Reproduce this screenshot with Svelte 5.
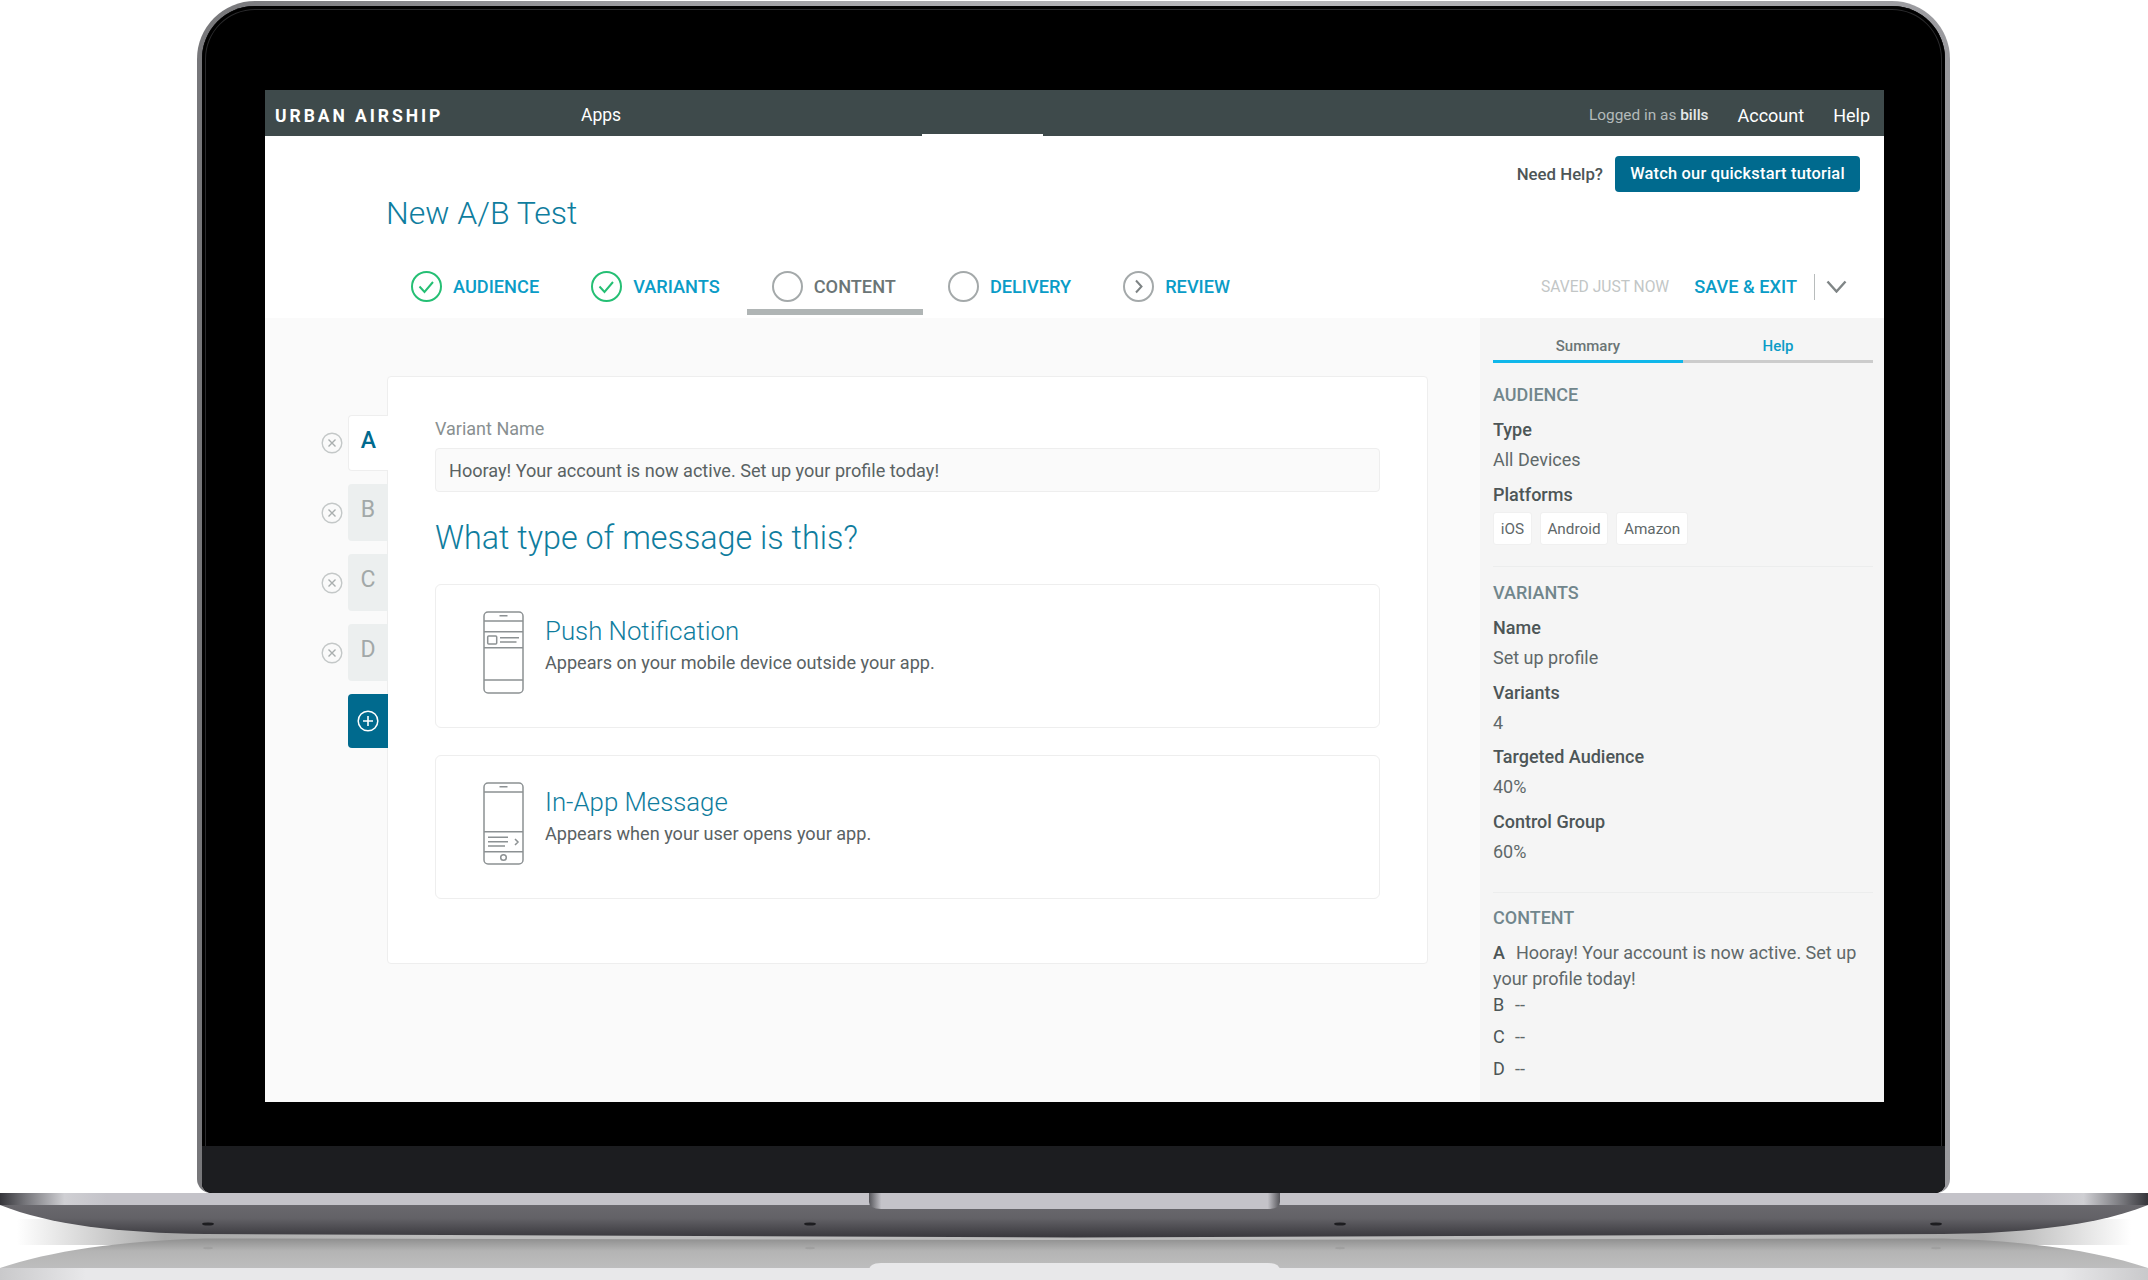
<script>
	const steps = [
		{ label: 'Audience', state: 'done' },
		{ label: 'Variants', state: 'done' },
		{ label: 'Content', state: 'current' },
		{ label: 'Delivery', state: 'todo' },
		{ label: 'Review', state: 'next' }
	];

	const rail = ['A', 'B', 'C', 'D'];
	const platforms = ['iOS', 'Android', 'Amazon'];

	const screws = [208, 810, 1340, 1936];
</script>

{#snippet stepIcon(state)}
	<svg class="step-icon" viewBox="0 0 31 31" aria-hidden="true">
		<circle
			cx="15.5"
			cy="15.5"
			r="14.5"
			fill="none"
			stroke={state === 'done' ? '#25bf74' : '#a4a9aa'}
			stroke-width="2"
		/>
		{#if state === 'done'}
			<path d="M8.5 15.5l5 5.5 8.5-10" fill="none" stroke="#25bf74" stroke-width="2" />
		{:else if state === 'next'}
			<path d="M13 9.5l5.5 6-5.5 6" fill="none" stroke="#7d8384" stroke-width="2" />
		{/if}
	</svg>
{/snippet}

{#snippet removeIcon()}
	<svg class="remove" viewBox="0 0 22 22" aria-hidden="true">
		<circle cx="11" cy="11" r="9.8" fill="none" stroke="#c4c8c8" stroke-width="1.4" />
		<path d="M7.5 7.5l7 7M14.5 7.5l-7 7" stroke="#a9aeae" stroke-width="1.4" />
	</svg>
{/snippet}

<div class="page">
	<div class="lid">
		<div class="bezel">
			<div class="screen">
				<nav class="topbar">
					<span class="logo">URBAN AIRSHIP</span>
					<a class="apps">Apps</a>
					<span class="login">Logged in as <b>bills</b></span>
					<a class="toplink">Account</a>
					<a class="toplink">Help</a>
				</nav>

				<header class="head">
					<div class="help-row">
						<span class="need">Need Help?</span>
						<button class="tutorial">Watch our quickstart tutorial</button>
					</div>
					<h1>New A/B Test</h1>
					<div class="steps-row">
						<ul class="steps">
							{#each steps as step}
								<li class="step" class:current={step.state === 'current'}>
									{@render stepIcon(step.state)}
									<span>{step.label}</span>
								</li>
							{/each}
						</ul>
						<div class="save">
							<span class="saved">SAVED JUST NOW</span>
							<a class="exit">SAVE &amp; EXIT</a>
							<span class="sep"></span>
							<svg class="chev" viewBox="0 0 21 13" aria-hidden="true">
								<path d="M1.5 1.5l9 10 9-10" fill="none" stroke="#7f8586" stroke-width="2.4" />
							</svg>
						</div>
					</div>
				</header>

				<div class="body">
					<main class="canvas">
						<div class="rail">
							{#each rail as letter, i}
								<div class="rail-row">
									{@render removeIcon()}
									<div class="vtab" class:active={i === 0}>{letter}</div>
								</div>
							{/each}
							<div class="rail-row">
								<div class="vtab add">
									<svg viewBox="0 0 22 22" aria-hidden="true">
										<circle cx="11" cy="11" r="9.8" fill="none" stroke="#fff" stroke-width="1.5" />
										<path d="M11 6v10M6 11h10" stroke="#fff" stroke-width="1.6" />
									</svg>
								</div>
							</div>
						</div>

						<section class="card">
							<label class="field-label" for="variant">Variant Name</label>
							<input
								id="variant"
								class="field"
								value="Hooray! Your account is now active. Set up your profile today!"
							/>
							<h2>What type of message is this?</h2>

							<div class="option">
								<svg class="phone" viewBox="0 0 41 83" aria-hidden="true">
									<g fill="none" stroke="#8c9193" stroke-width="1.5">
										<rect x="1" y="1" width="39" height="81" rx="4" />
										<path d="M16.5 4.8h8M1 10h39M1 20.7h39M1 36.7h39M1 69h39" />
										<rect x="4.7" y="25" width="9" height="8" rx="1" />
										<path d="M17 26.7h19M17 31h16.5" />
									</g>
								</svg>
								<div>
									<h3>Push Notification</h3>
									<p>Appears on your mobile device outside your app.</p>
								</div>
							</div>

							<div class="option second">
								<svg class="phone" viewBox="0 0 41 83" aria-hidden="true">
									<g fill="none" stroke="#8c9193" stroke-width="1.5">
										<rect x="1" y="1" width="39" height="81" rx="4" />
										<path d="M16.5 4.8h8M1 10h39M1 49.7h39M1 69.7h39" />
										<path d="M5 55.3h20M5 59.7h20M5 64h17M32 57l3 3-3 3" />
										<circle cx="20.5" cy="75.5" r="2.8" />
									</g>
								</svg>
								<div>
									<h3>In-App Message</h3>
									<p>Appears when your user opens your app.</p>
								</div>
							</div>
						</section>
					</main>

					<aside class="side">
						<div class="side-tabs">
							<span class="side-tab on">Summary</span>
							<span class="side-tab">Help</span>
						</div>

						<section class="side-sec first">
							<h4>AUDIENCE</h4>
							<div class="k">Type</div>
							<div class="v">All Devices</div>
							<div class="k">Platforms</div>
							<div class="chips">
								{#each platforms as p}
									<span class="chip">{p}</span>
								{/each}
							</div>
						</section>

						<section class="side-sec second">
							<h4>VARIANTS</h4>
							<div class="k">Name</div>
							<div class="v">Set up profile</div>
							<div class="k">Variants</div>
							<div class="v">4</div>
							<div class="k">Targeted Audience</div>
							<div class="v">40%</div>
							<div class="k">Control Group</div>
							<div class="v">60%</div>
						</section>

						<section class="side-sec last">
							<h4>CONTENT</h4>
							<p class="line"><b>A</b>Hooray! Your account is now active. Set up your profile today!</p>
							<p class="line short"><i>B</i>--</p>
							<p class="line short"><i>C</i>--</p>
							<p class="line short"><i>D</i>--</p>
						</section>
					</aside>
				</div>
			</div>
			<div class="black-chin"></div>
			<div class="chin"></div>
		</div>
	</div>

	<svg class="base" viewBox="0 0 2148 87" aria-hidden="true">
		<defs>
			<linearGradient id="band">
				<stop offset="0" stop-color="#35353a" />
				<stop offset="0.012" stop-color="#77777c" />
				<stop offset="0.03" stop-color="#cfcfd3" />
				<stop offset="0.05" stop-color="#c4c3c9" />
				<stop offset="0.95" stop-color="#c4c3c9" />
				<stop offset="0.97" stop-color="#cfcfd3" />
				<stop offset="0.988" stop-color="#77777c" />
				<stop offset="1" stop-color="#35353a" />
			</linearGradient>
			<linearGradient id="notch">
				<stop offset="0" stop-color="#55555a" />
				<stop offset="0.03" stop-color="#c4c3c9" />
				<stop offset="0.97" stop-color="#c4c3c9" />
				<stop offset="1" stop-color="#55555a" />
			</linearGradient>
			<linearGradient id="body" x1="0" y1="0" x2="0" y2="1">
				<stop offset="0" stop-color="#69686d" />
				<stop offset="0.4" stop-color="#636267" />
				<stop offset="1" stop-color="#38373c" />
			</linearGradient>
			<linearGradient id="mirror" x1="0" y1="0" x2="0" y2="1">
				<stop offset="0" stop-color="#8f8f8f" />
				<stop offset="0.3" stop-color="#b4b4b4" />
				<stop offset="1" stop-color="#c4c4c5" />
			</linearGradient>
			<linearGradient id="shade">
				<stop offset="0" stop-color="#ffffff" />
				<stop offset="0.07" stop-color="#a8a8a8" />
				<stop offset="0.2" stop-color="#bcbcbc" />
				<stop offset="0.8" stop-color="#bcbcbc" />
				<stop offset="0.93" stop-color="#a8a8a8" />
				<stop offset="1" stop-color="#ffffff" />
			</linearGradient>
			<linearGradient id="band2">
				<stop offset="0" stop-color="#c9c9cb" />
				<stop offset="0.04" stop-color="#e8e8ea" />
				<stop offset="0.96" stop-color="#e8e8ea" />
				<stop offset="1" stop-color="#c9c9cb" />
			</linearGradient>
		</defs>

		<rect x="17" y="26" width="2114" height="26" fill="url(#shade)" />

		<path d="M0 12H2148C2098 32 2028 40 1943 41L1074 44.5 205 41C120 40 50 32 0 12Z" fill="url(#body)" />
		<rect width="2148" height="12" fill="url(#band)" />
		<path d="M869 0H1280V9Q1280 16 1268 16H881Q869 16 869 9Z" fill="url(#notch)" />

		<path d="M0 75C50 58 120 48 205 45.5L1074 47 1943 45.5C2028 48 2098 58 2148 75V87H0Z" fill="url(#mirror)" />
		<rect y="75" width="2148" height="12" fill="url(#band2)" />
		<path d="M869 87V78Q869 70 881 70H1268Q1280 70 1280 78V87Z" fill="#e8e8ea" />

		{#each screws as x}
			<ellipse cx={x} cy="31" rx="6" ry="1.6" fill="#1d1d20" />
			<ellipse cx={x} cy="55" rx="5" ry="1.2" fill="#a0a0a0" />
		{/each}
	</svg>
</div>

<style>
	:global(body) {
		margin: 0;
		background: #fff;
	}

	.page {
		width: 2148px;
		height: 1280px;
		padding-top: 1px;
		box-sizing: border-box;
		overflow: hidden;
		font-family: Roboto, 'Liberation Sans', sans-serif;
		color: #4d5657;
	}

	/* laptop shell */
	.lid {
		width: 1753px;
		height: 1192px;
		margin-left: 197px;
		box-sizing: border-box;
		padding: 5px 5px 0;
		border-radius: 58px 58px 14px 14px;
		background: linear-gradient(90deg, #77777a 0%, #9c9ca0 25%, #b9b9bc 60%, #9a9a9e 100%);
	}

	.bezel {
		height: 100%;
		box-sizing: border-box;
		padding: 84px 61px 0 63px;
		border-radius: 53px 53px 10px 10px;
		background: #000;
		box-shadow: inset 0 0 0 3px #000, inset 0 0 0 4px #2a2a2c;
		display: flex;
		flex-direction: column;
		position: relative;
	}

	.black-chin {
		height: 44px;
		flex: none;
	}

	.chin {
		flex: 1;
		margin: 0 -61px 0 -63px;
		background: #1c1d20;
		border-radius: 0 0 10px 10px;
	}

	.base {
		display: block;
		width: 2148px;
		height: 87px;
	}

	.screen {
		height: 1012px;
		flex: none;
		display: flex;
		flex-direction: column;
		background: #fafafa;
	}

	/* top bar */
	.topbar {
		position: relative;
		height: 46px;
		flex: none;
		box-sizing: border-box;
		padding: 4px 14px 0 10px;
		display: flex;
		align-items: center;
		background: #3e4a4b;
		color: #fff;
	}

	.topbar::after {
		content: '';
		position: absolute;
		left: 657px;
		bottom: 0;
		width: 121px;
		height: 2px;
		background: #fff;
	}

	.logo {
		width: 306px;
		padding-top: 2px;
		font-size: 17.5px;
		font-weight: 700;
		letter-spacing: 2.95px;
	}

	.apps {
		font-size: 17.5px;
		margin-right: auto;
	}

	.login {
		font-size: 15.4px;
		color: #b3baba;
		margin-right: 29px;
	}

	.login b {
		font-weight: 500;
		color: #e4e7e7;
	}

	.toplink {
		font-size: 18px;
	}

	.toplink + .toplink {
		margin-left: 29px;
	}

	/* page header */
	.head {
		height: 182px;
		flex: none;
		box-sizing: border-box;
		padding-top: 20px;
		background: #fff;
		display: flex;
		flex-direction: column;
	}

	.help-row {
		display: flex;
		align-items: center;
		justify-content: flex-end;
		gap: 12px;
		padding-right: 24px;
		height: 36px;
	}

	.need {
		font-size: 16.8px;
		font-weight: 500;
		color: #4d5657;
		margin-top: -1px;
	}

	.tutorial {
		width: 245px;
		height: 36px;
		padding: 0 0 1px;
		border: 0;
		border-radius: 4px;
		background: #006a8e;
		color: #fff;
		font: 500 16.4px Roboto, sans-serif;
		letter-spacing: 0.2px;
	}

	h1 {
		margin: 1px 0 0 121px;
		font-size: 32px;
		line-height: 40px;
		font-weight: 300;
		color: #0f7d9e;
	}

	.steps-row {
		margin-top: 33px;
		display: flex;
		align-items: flex-start;
		padding-left: 121px;
	}

	.steps {
		list-style: none;
		margin: 0;
		padding: 0;
		display: flex;
	}

	.step {
		display: flex;
		align-items: center;
		gap: 11px;
		height: 37px;
		padding: 2px 27px 4px 25px;
		box-sizing: content-box;
		border-bottom: 6px solid transparent;
		font-size: 18.2px;
		font-weight: 500;
		text-transform: uppercase;
		color: #0a9cc7;
	}

	.step.current {
		border-bottom-color: #b0b5b5;
		color: #6b7576;
	}

	.step-icon {
		width: 31px;
		height: 31px;
		flex: none;
	}

	.save {
		margin-left: auto;
		padding: 2px 37px 0 0;
		height: 37px;
		display: flex;
		align-items: center;
	}

	.saved {
		font-size: 15.6px;
		color: #c2c6c6;
		margin-right: 25px;
	}

	.exit {
		font-size: 18.2px;
		font-weight: 500;
		color: #0a9cc7;
		margin-right: 17px;
	}

	.sep {
		width: 1px;
		height: 26px;
		background: #b8bcbc;
		margin-right: 11px;
	}

	.chev {
		width: 21px;
		height: 13px;
	}

	/* main area */
	.body {
		flex: 1;
		display: flex;
		min-height: 0;
	}

	.canvas {
		flex: 1;
		display: flex;
		align-items: flex-start;
		padding: 58px 0 0 56px;
	}

	.rail {
		width: 67px;
		padding-top: 39px;
		display: flex;
		flex-direction: column;
		gap: 13px;
		position: relative;
		z-index: 1;
		margin-right: -1px;
	}

	.rail-row {
		display: flex;
		align-items: center;
		justify-content: flex-end;
		gap: 5px;
	}

	.vtab {
		width: 40px;
		height: 57px;
		box-sizing: border-box;
		padding-bottom: 6px;
		display: flex;
		align-items: center;
		justify-content: center;
		border-radius: 4px 0 0 4px;
		background: #ecefef;
		font-size: 23px;
		color: #a2a8a8;
	}

	.vtab.active {
		height: 56px;
		background: #fff;
		border: 1px solid #eeeeee;
		border-right: 0;
		color: #006a8e;
		font-weight: 500;
	}

	.vtab.add {
		height: 54px;
		padding: 0;
		background: #006a8e;
	}

	.vtab.add svg {
		width: 22px;
		height: 22px;
	}

	.remove {
		width: 22px;
		height: 22px;
		flex: none;
	}

	.card {
		width: 1041px;
		height: 588px;
		box-sizing: border-box;
		padding: 42px 47px 0 47px;
		background: #fff;
		border: 1px solid #eeeeee;
		border-radius: 4px;
	}

	.field-label {
		display: block;
		font-size: 18px;
		line-height: 20px;
		color: #899091;
	}

	.field {
		display: block;
		width: 100%;
		height: 44px;
		margin-top: 9px;
		box-sizing: border-box;
		padding: 1px 13px 0;
		background: #fafafa;
		border: 1px solid #eeeeee;
		border-radius: 4px;
		font: 400 18.1px Roboto, sans-serif;
		color: #596263;
	}

	h2 {
		margin: 26px 0 26px;
		font-size: 32.3px;
		line-height: 40px;
		font-weight: 300;
		color: #0f7d9e;
	}

	.option {
		height: 144px;
		box-sizing: border-box;
		padding: 26px 0 0 47px;
		display: flex;
		align-items: flex-start;
		gap: 21px;
		border: 1px solid #eeeeee;
		border-radius: 6px;
		background: #fff;
	}

	.option.second {
		margin-top: 27px;
	}

	.phone {
		width: 41px;
		height: 83px;
		flex: none;
	}

	h3 {
		margin: 4px 0 0;
		font-size: 25.8px;
		line-height: 32px;
		font-weight: 300;
		color: #0f7d9e;
	}

	.option p {
		margin: 4px 0 0;
		font-size: 18.1px;
		line-height: 24px;
		color: #596263;
	}

	/* summary column */
	.side {
		width: 404px;
		flex: none;
		box-sizing: border-box;
		padding: 18px 11px 0 13px;
		background: #f5f5f5;
	}

	.side-tabs {
		display: flex;
	}

	.side-tab {
		flex: 1;
		text-align: center;
		padding-bottom: 4px;
		line-height: 20px;
		font-size: 15px;
		font-weight: 500;
		color: #0a9cc7;
		border-bottom: 3px solid #cccccc;
	}

	.side-tab.on {
		color: #6b7576;
		border-bottom-color: #0fb7ea;
	}

	h4 {
		margin: 0;
		font-size: 18px;
		line-height: 22px;
		font-weight: 500;
		color: #71868c;
	}

	.side-sec {
		border-bottom: 1px solid #eceded;
	}

	.side-sec.first {
		margin-top: 21px;
		padding-bottom: 21px;
	}

	.side-sec.second {
		margin-top: 15px;
		padding-bottom: 29px;
	}

	.side-sec.second .k {
		margin-top: 12.75px;
	}

	.side-sec.last {
		margin-top: 14px;
		border-bottom: 0;
	}

	.k {
		margin-top: 13px;
		font-size: 18px;
		line-height: 22px;
		font-weight: 500;
		color: #4d5657;
	}

	.v {
		margin-top: 8px;
		font-size: 18px;
		line-height: 22px;
		color: #5f6869;
	}

	.chips {
		display: flex;
		gap: 8px;
	}

	.chip {
		height: 33px;
		margin-top: 6px;
		padding: 0 6.7px;
		display: flex;
		align-items: center;
		box-sizing: border-box;
		background: #fff;
		border: 1px solid #f0f0f0;
		border-radius: 3px;
		font-size: 15.3px;
		color: #5f6869;
	}

	.line {
		margin: 11px 0 0;
		font-size: 18px;
		line-height: 26px;
		color: #5f6869;
	}

	.line.short {
		margin: 0 0 6px;
	}

	.line b {
		font-weight: 500;
		color: #4d5657;
		margin-right: 11px;
	}

	.line i {
		font-style: normal;
		display: inline-block;
		width: 22px;
		color: #4d5657;
	}
</style>
